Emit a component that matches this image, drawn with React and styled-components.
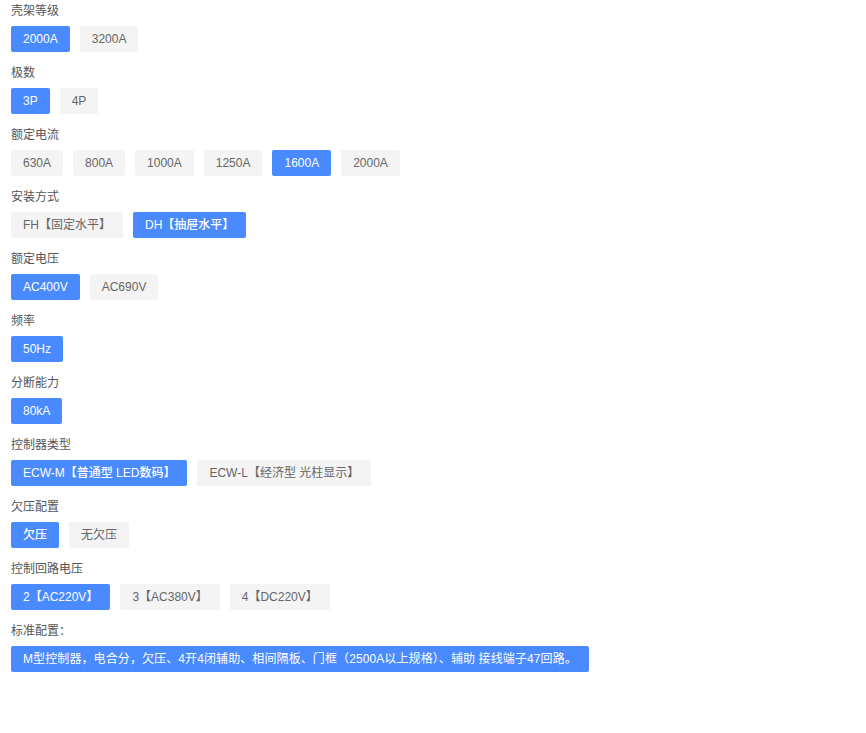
import React, { useState } from "react";
import styled, { createGlobalStyle } from "styled-components";

const GlobalStyle = createGlobalStyle`
  body {
    margin: 0;
    background: #fff;
    font-family: Arial, "Liberation Sans", "Noto Sans CJK SC", sans-serif;
  }
`;

const Page = styled.div`
  padding: 0 11px;
`;

const Section = styled.div`
  margin-bottom: 10px;
`;

const Label = styled.div`
  font-size: 12px;
  line-height: 22px;
  height: 20px;
  color: #555;
  margin-bottom: 6px;
`;

const Options = styled.div`
  display: flex;
  flex-wrap: wrap;
  gap: 10px;
`;

const Option = styled.button`
  height: 26px;
  padding: 0 12px;
  border: none;
  border-radius: 2px;
  font-family: inherit;
  font-size: 12px;
  line-height: 26px;
  white-space: nowrap;
  cursor: pointer;
  background: ${({ $active }) => ($active ? "#4a8aff" : "#f4f4f4")};
  color: ${({ $active }) => ($active ? "#fff" : "#666")};
  font-weight: ${({ $active }) => ($active ? 500 : "normal")};
`;

const Summary = styled.div`
  display: inline-block;
  height: 26px;
  line-height: 26px;
  padding: 0 12px;
  border-radius: 2px;
  background: #4a8aff;
  color: #fff;
  font-size: 12px;
  letter-spacing: 0.1px;
  white-space: nowrap;
`;

const groups = [
  { label: "壳架等级", options: ["2000A", "3200A"], active: 0 },
  { label: "极数", options: ["3P", "4P"], active: 0 },
  { label: "额定电流", options: ["630A", "800A", "1000A", "1250A", "1600A", "2000A"], active: 4 },
  { label: "安装方式", options: ["FH【固定水平】", "DH【抽屉水平】"], active: 1 },
  { label: "额定电压", options: ["AC400V", "AC690V"], active: 0 },
  { label: "频率", options: ["50Hz"], active: 0 },
  { label: "分断能力", options: ["80kA"], active: 0 },
  { label: "控制器类型", options: ["ECW-M【普通型 LED数码】", "ECW-L【经济型 光柱显示】"], active: 0 },
  { label: "欠压配置", options: ["欠压", "无欠压"], active: 0 },
  { label: "控制回路电压", options: ["2【AC220V】", "3【AC380V】", "4【DC220V】"], active: 0 },
];

export default function App() {
  const [selected, setSelected] = useState(groups.map((g) => g.active));

  const pick = (gi, oi) =>
    setSelected((s) => s.map((v, i) => (i === gi ? oi : v)));

  return (
    <Page>
      <GlobalStyle />
      {groups.map((g, gi) => (
        <Section key={g.label}>
          <Label>{g.label}</Label>
          <Options>
            {g.options.map((o, oi) => (
              <Option key={o} $active={selected[gi] === oi} onClick={() => pick(gi, oi)}>
                {o}
              </Option>
            ))}
          </Options>
        </Section>
      ))}
      <Section>
        <Label>标准配置：</Label>
        <Summary>
          M型控制器，电合分，欠压、4开4闭辅助、相间隔板、门框（2500A以上规格）、辅助 接线端子47回路。
        </Summary>
      </Section>
    </Page>
  );
}
